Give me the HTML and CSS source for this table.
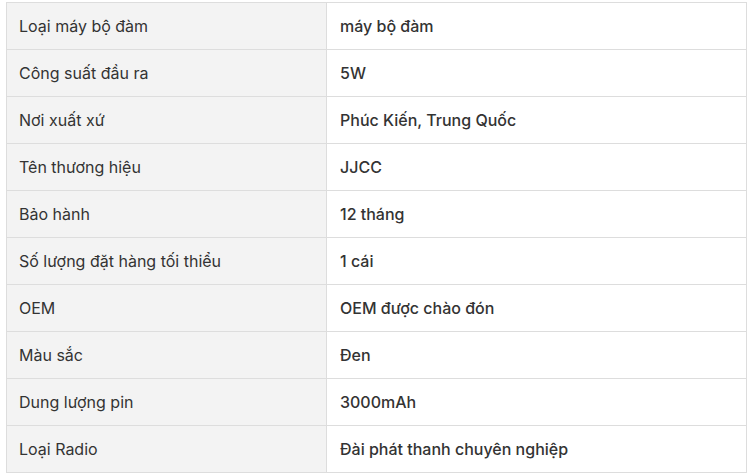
FILE: index.html
```html
<!DOCTYPE html>
<html lang="vi">
<head>
<meta charset="utf-8">
<link rel="stylesheet" href="styles.css">
</head>
<body>
<table class="spec">
<tbody>
<tr><td class="k">Loại máy bộ đàm</td><td class="v">máy bộ đàm</td></tr>
<tr><td class="k">Công suất đầu ra</td><td class="v">5W</td></tr>
<tr><td class="k">Nơi xuất xứ</td><td class="v">Phúc Kiến, Trung Quốc</td></tr>
<tr><td class="k">Tên thương hiệu</td><td class="v">JJCC</td></tr>
<tr><td class="k">Bảo hành</td><td class="v">12 tháng</td></tr>
<tr><td class="k">Số lượng đặt hàng tối thiểu</td><td class="v">1 cái</td></tr>
<tr><td class="k">OEM</td><td class="v">OEM được chào đón</td></tr>
<tr><td class="k">Màu sắc</td><td class="v">Đen</td></tr>
<tr><td class="k">Dung lượng pin</td><td class="v">3000mAh</td></tr>
<tr><td class="k">Loại Radio</td><td class="v">Đài phát thanh chuyên nghiệp</td></tr>
</tbody>
</table>
</body>
</html>
```
FILE: styles.css
```css
html, body { margin: 0; padding: 0; background: #fff; }
body { padding: 2px 0 0 6px; font-family: Inter, "Noto Sans", sans-serif; font-size: 16px; color: #222; }
.spec { border-collapse: collapse; width: 741px; table-layout: fixed; }
.spec td { border: 1px solid #dddddd; height: 47px; padding: 0 12px; box-sizing: border-box; vertical-align: middle; line-height: 20px; }
.spec td.k { width: 320px; background: #f3f3f3; font-weight: 400; color: #333; }
.spec td.v { background: #fff; font-weight: 500; color: #333; padding-left: 13px; }
```
